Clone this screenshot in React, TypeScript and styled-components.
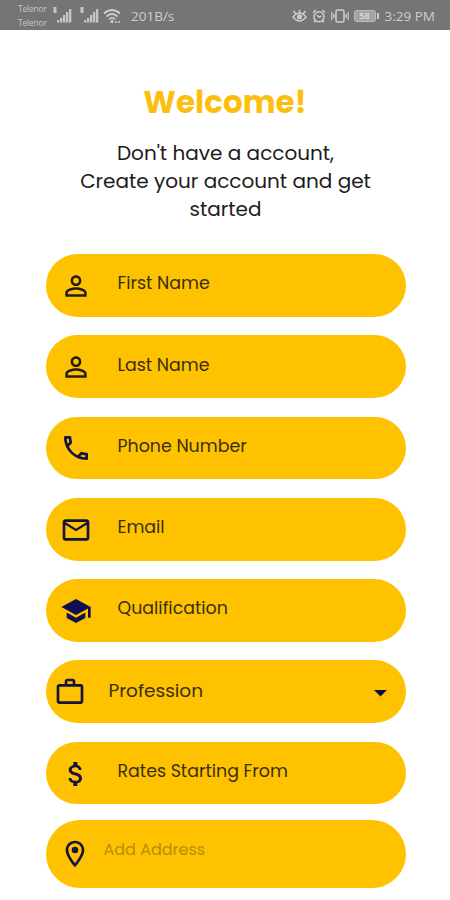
import React from "react";
import styled, { createGlobalStyle } from "styled-components";
import type { IconType } from "react-icons";
import {
  MdPersonOutline,
  MdOutlinePhone,
  MdMailOutline,
  MdSchool,
  MdWorkOutline,
  MdAttachMoney,
  MdOutlineLocationOn,
  MdArrowDropDown,
} from "react-icons/md";

const Global = createGlobalStyle`
  * { box-sizing: border-box; }
  body { margin: 0; background: #fff; font-family: Poppins, Inter, sans-serif; }
`;

const Screen = styled.main`
  width: 450px;
  height: 900px;
  overflow: hidden;
  display: flex;
  flex-direction: column;
  background: #fff;
`;

const StatusBar = styled.header`
  height: 30px;
  flex: none;
  display: flex;
  align-items: center;
  padding: 2px 15px 0 18px;
  background: #757575;
  color: #cecece;
  font-family: "Open Sans", "Noto Sans", sans-serif;
`;

const Carriers = styled.div`
  width: 29px;
  margin-right: 6px;
  font-size: 8.5px;
  line-height: 14px;
  letter-spacing: -0.2px;
  color: #c4c4c4;
`;

const StatusIcon = styled.svg<{ $gap: number }>`
  flex: none;
  display: block;
  margin-right: ${(p) => p.$gap}px;
`;

const Speed = styled.span`
  font-size: 13.5px;
  margin-right: auto;
`;

const Battery = styled.span`
  width: 22px;
  height: 12px;
  border: 1px solid #bcbcbc;
  border-radius: 3px;
  background: #a4a4a4;
  color: #dedede;
  font-size: 9px;
  font-weight: 600;
  line-height: 10px;
  text-align: center;
`;

const BatteryTip = styled.span`
  width: 2px;
  height: 6px;
  margin: 0 6px 0 1px;
  background: #c8c8c8;
`;

const Clock = styled.span`
  font-size: 13.5px;
`;

const Title = styled.h1`
  margin: 52px 0 0;
  height: 40px;
  line-height: 40px;
  text-align: center;
  font-size: 31px;
  font-weight: 700;
  color: #fdbf0f;
`;

const Intro = styled.p`
  margin: 16.5px 0 0;
  padding-left: 1px;
  display: flex;
  flex-direction: column;
  align-items: center;
  font-size: 20px;
  line-height: 28px;
  color: #1c1c1c;
`;

const Form = styled.form`
  width: 360px;
  margin: 31.5px 0 0 45.5px;
  display: flex;
  flex-direction: column;
  gap: 18.6px;
`;

const Field = styled.div<{ $inset: number; $tall?: boolean }>`
  height: ${(p) => (p.$tall ? 68 : 62.7)}px;
  margin-top: ${(p) => (p.$tall ? -3 : 0)}px;
  flex: none;
  display: flex;
  align-items: center;
  padding: 0 9.5px 0 ${(p) => p.$inset}px;
  border-radius: 34px;
  background: #fec200;
  color: #14143c;

  > svg {
    flex: none;
    margin-top: 1px;
  }
`;

const Label = styled.span<{ $gap: number; $size: number; $muted?: boolean; $lift: number }>`
  flex: 1;
  margin-left: ${(p) => p.$gap}px;
  padding-bottom: ${(p) => p.$lift}px;
  font-size: ${(p) => p.$size}px;
  line-height: 24px;
  white-space: nowrap;
  color: ${(p) => (p.$muted ? "#b68d0c" : "#3a2f10")};
`;

type FieldSpec = {
  label: string;
  icon: IconType;
  color?: string;
  inset?: number;
  gap?: number;
  size?: number;
  lift?: number;
  muted?: boolean;
  tall?: boolean;
  select?: boolean;
};

const fields: FieldSpec[] = [
  { label: "First Name", icon: MdPersonOutline, color: "#221b10" },
  { label: "Last Name", icon: MdPersonOutline, color: "#221b10" },
  { label: "Phone Number", icon: MdOutlinePhone },
  { label: "Email", icon: MdMailOutline },
  { label: "Qualification", icon: MdSchool, color: "#10104f" },
  { label: "Profession", icon: MdWorkOutline, inset: 8.5, gap: 22.5, size: 18.5, lift: 2, select: true },
  { label: "Rates Starting From", icon: MdAttachMoney },
  { label: "Add Address", icon: MdOutlineLocationOn, inset: 13, gap: 13, size: 16, lift: 8, muted: true, tall: true },
];

const Signal = ({ gap }: { gap: number }) => (
  <StatusIcon $gap={gap} width="21" height="18" viewBox="0 0 21 18" fill="#c6c6c6">
    <rect x="0.5" y="0" width="3" height="6" />
    <rect x="4" y="13" width="2.3" height="2.5" />
    <rect x="7" y="11" width="2.3" height="4.5" />
    <rect x="10" y="8" width="2.3" height="7.5" />
    <rect x="13" y="5" width="2.3" height="10.5" />
    <rect x="16" y="2" width="2.3" height="13.5" />
  </StatusIcon>
);

const Wifi = () => (
  <StatusIcon $gap={10} width="18" height="16" viewBox="0 0 18 16" fill="none" stroke="#cecece" strokeWidth="1.8">
    <path d="M1 5.5Q9-1.5 17 5.5M3.5 8.5Q9 3.5 14.5 8.5M6 11.3Q9 8.5 12 11.3" />
    <circle cx="9" cy="13.5" r=".7" />
    <path d="M12 14h5" strokeWidth="1.5" strokeDasharray="2 1" />
  </StatusIcon>
);

const Eye = () => (
  <StatusIcon $gap={5} width="15" height="14" viewBox="0 0 15 14" fill="none" stroke="#cecece" strokeWidth="1.5">
    <path d="M1 8Q7.5 0 14 8Q7.5 16 1 8ZM7.5 3.5V.8M3.5 4.5 1.5 2M11.5 4.5l2-2.5" />
    <circle cx="7.5" cy="7.8" r="1.8" fill="#cecece" />
  </StatusIcon>
);

const Alarm = () => (
  <StatusIcon $gap={5} width="14" height="14" viewBox="0 0 14 14" fill="none" stroke="#cecece" strokeWidth="1.5">
    <circle cx="7" cy="7.7" r="5" />
    <path d="M.8 3.5 3.8 1M13.2 3.5 10.2 1M4.8 6 7 8.2l2.5-1.2M3.5 11.5l-1.3 1.7M10.500 11.500l1.300 1.700" />
  </StatusIcon>
);

const Vibrate = () => (
  <StatusIcon $gap={5} width="18" height="14" viewBox="0 0 18 14" fill="none" stroke="#cecece" strokeWidth="1.5">
    <rect x="5" y="1" width="8" height="12" rx="1.5" />
    <path d="M.8 3v8M3 5v4M15 5v4M17.200 3v8" strokeWidth="1.3" />
  </StatusIcon>
);

export default function App() {
  return (
    <Screen>
      <Global />
      <StatusBar>
        <Carriers>
          <div>Telenor</div>
          <div>Telenor</div>
        </Carriers>
        <Signal gap={6} />
        <Signal gap={2} />
        <Wifi />
        <Speed>201B/s</Speed>
        <Eye />
        <Alarm />
        <Vibrate />
        <Battery>58</Battery>
        <BatteryTip />
        <Clock>3:29 PM</Clock>
      </StatusBar>
      <Title>Welcome!</Title>
      <Intro>
        <span>Don't have a account,</span>
        <span>Create your account and get</span>
        <span>started</span>
      </Intro>
      <Form>
        {fields.map(({ label, icon: Icon, color, inset = 14.5, gap = 25.5, size = 17.4, lift = 4, muted, tall, select }) => (
          <Field key={label} $inset={inset} $tall={tall}>
            <Icon size={32} color={color} />
            <Label $gap={gap} $size={size} $lift={lift} $muted={muted}>
              {label}
            </Label>
            {select && <MdArrowDropDown size={31} color="#0d0d4d" />}
          </Field>
        ))}
      </Form>
    </Screen>
  );
}
